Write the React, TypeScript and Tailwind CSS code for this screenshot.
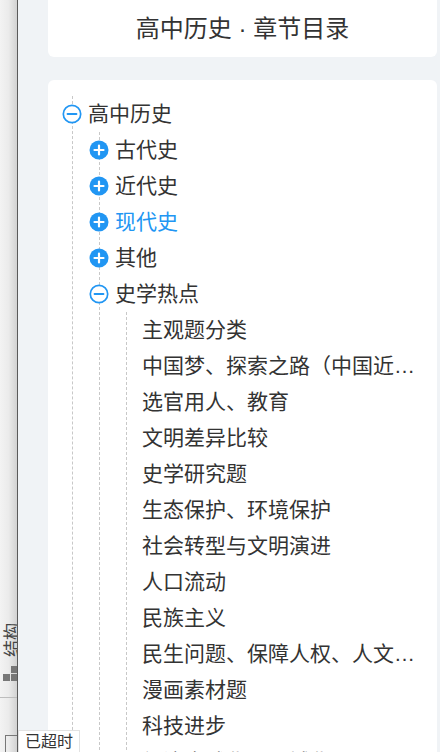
import React from "react";

const FONT = '"Liberation Sans", "Noto Sans CJK SC", sans-serif';

interface TreeNode {
  label: string;
  open?: boolean;
  active?: boolean;
  children?: TreeNode[];
}

const tree: TreeNode = {
  label: "高中历史",
  open: true,
  children: [
    { label: "古代史", children: [] },
    { label: "近代史", children: [] },
    { label: "现代史", active: true, children: [] },
    { label: "其他", children: [] },
    {
      label: "史学热点",
      open: true,
      children: [
        { label: "主观题分类" },
        { label: "中国梦、探索之路（中国近现代史的探索历程）" },
        { label: "选官用人、教育" },
        { label: "文明差异比较" },
        { label: "史学研究题" },
        { label: "生态保护、环境保护" },
        { label: "社会转型与文明演进" },
        { label: "人口流动" },
        { label: "民族主义" },
        { label: "民生问题、保障人权、人文关怀" },
        { label: "漫画素材题" },
        { label: "科技进步" },
        { label: "经济全球化与区域化" },
      ],
    },
  ],
};

function PlusIcon() {
  return (
    <svg width="20" height="20" viewBox="0 0 20 20" className="shrink-0">
      <circle cx="10" cy="10" r="9.5" fill="#2196f3" />
      <path d="M5.5 10h9M10 5.5v9" stroke="#fff" strokeWidth="2.2" strokeLinecap="round" />
    </svg>
  );
}

function MinusIcon() {
  return (
    <svg width="20" height="20" viewBox="0 0 20 20" className="shrink-0">
      <circle cx="10" cy="10" r="8.7" fill="#fff" stroke="#2196f3" strokeWidth="1.7" />
      <path d="M5.5 10h9" stroke="#2196f3" strokeWidth="1.8" strokeLinecap="round" />
    </svg>
  );
}

function Row({ node }: { node: TreeNode }) {
  const leaf = !node.children;
  const color = node.active ? "text-[#2196f3]" : "text-[#333]";
  if (leaf) {
    return (
      <div className={`h-9 pl-[15px] pr-[18px] flex items-center min-w-0 text-[21px] ${color}`}>
        <span className="truncate min-w-0">{node.label}</span>
      </div>
    );
  }
  return (
    <div className={`h-9 -ml-[11px] flex items-center gap-[6px] text-[21px] ${color}`}>
      {node.open ? <MinusIcon /> : <PlusIcon />}
      <span className="truncate">{node.label}</span>
    </div>
  );
}

function Children({ nodes }: { nodes: TreeNode[] }) {
  return (
    <div className="ml-[26px] border-l border-dashed border-[#c8c8c8]">
      {nodes.map((n) => (
        <div key={n.label}>
          <Row node={n} />
          {n.open && n.children && n.children.length > 0 && (
            <Children nodes={n.children} />
          )}
        </div>
      ))}
    </div>
  );
}

function SideStrip() {
  return (
    <div className="w-[18px] shrink-0 h-full overflow-hidden flex flex-col justify-end items-start bg-gradient-to-r from-[#f3f3f3] via-[#ebebeb] to-[#d2d2d2] border-r border-[#5a5a5a]">
      <div className="ml-[4px] w-[18px] h-[36px] shrink-0 flex items-center justify-center">
        <span className="-rotate-90 whitespace-nowrap text-[17px] leading-[18px] text-[#444]">结构</span>
      </div>
      <div className="mt-[8px] ml-[3px] grid grid-cols-2 gap-[1px] w-[15px] shrink-0">
        <div className="h-[7px]" />
        <div className="h-[7px] bg-[#777]" />
        <div className="h-[7px] bg-[#777]" />
        <div className="h-[7px] bg-[#777]" />
      </div>
      <div className="mt-[16px] h-px w-full bg-[#bdbdbd] shrink-0" />
      <div className="mt-[37px] ml-[5px] h-[17px] w-[13px] border border-[#777] border-b-0 shrink-0" />
    </div>
  );
}

export default function App() {
  return (
    <div
      className="relative w-[440px] h-[752px] overflow-hidden flex"
      style={{ fontFamily: FONT }}
    >
      <SideStrip />
      <div className="flex-1 min-w-0 overflow-hidden bg-[#f0f3f6] pl-[30px] pr-[3px] flex flex-col">
        <div className="h-[57px] shrink-0 bg-white rounded-b-md flex items-center justify-center text-[24px] text-[#333]">
          高中历史 · 章节目录
        </div>
        <div className="mt-[23px] shrink-0 bg-white rounded-t-md pl-6 pt-[16px] pb-10">
          <div className="border-l border-dashed border-[#c8c8c8]">
            <Row node={tree} />
            <Children nodes={tree.children!} />
          </div>
        </div>
      </div>
      <div className="absolute left-[18px] bottom-0 h-[22px] px-[6px] bg-white border border-[#e2e2e2] border-b-0 flex items-center text-[16px] text-[#333]">
        已超时
      </div>
    </div>
  );
}
